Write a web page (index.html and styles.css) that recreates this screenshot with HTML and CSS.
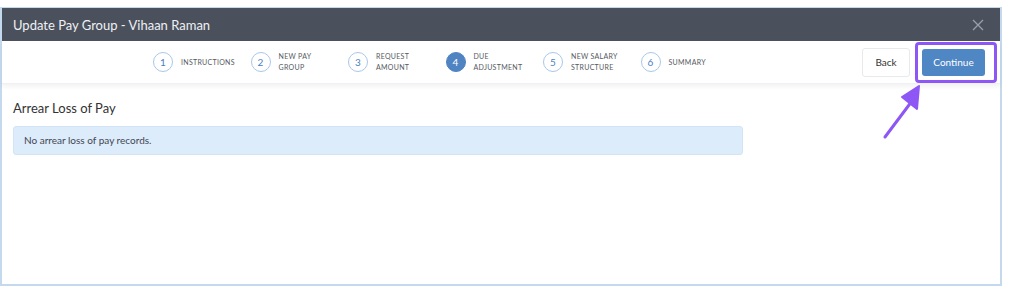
FILE: index.html
```html
<!DOCTYPE html>
<html lang="en">
<head>
  <meta charset="UTF-8" />
  <title>Update Pay Group</title>
  <link rel="stylesheet" href="styles.css">
</head>
<body>
  <div class="modal">
    <div class="modal-header">
      <span class="modal-title">Update Pay Group - Vihaan Raman</span>
      <svg class="close" width="12" height="12" viewBox="0 0 12 12">
        <path d="M1 1 L11 11 M11 1 L1 11" stroke="#9aa0ab" stroke-width="1.3" fill="none"/>
      </svg>
    </div>

    <div class="toolbar">
      <div class="steps">
        <div class="step"><span class="num">1</span><span class="label">Instructions</span></div>
        <div class="step"><span class="num">2</span><span class="label">New Pay<br>Group</span></div>
        <div class="step"><span class="num">3</span><span class="label">Request<br>Amount</span></div>
        <div class="step active"><span class="num">4</span><span class="label">Due<br>Adjustment</span></div>
        <div class="step"><span class="num">5</span><span class="label">New Salary<br>Structure</span></div>
        <div class="step"><span class="num">6</span><span class="label">Summary</span></div>
      </div>
      <div class="actions">
        <button class="btn">Back</button>
        <div class="highlight">
          <button class="btn primary">Continue</button>
        </div>
      </div>
    </div>

    <div class="content">
      <h3>Arrear Loss of Pay</h3>
      <div class="info">No arrear loss of pay records.</div>
    </div>

    <!-- annotation arrow pointing at Continue -->
    <svg class="arrow" width="50" height="56" viewBox="0 0 50 56">
      <path d="M3 53 L30 17" stroke="#8e57f5" stroke-width="3" stroke-linecap="round" fill="none"/>
      <path d="M37 2 L20 13 L35 25 Z" fill="#8e57f5" stroke="#8e57f5" stroke-width="2" stroke-linejoin="round"/>
    </svg>
  </div>
</body>
</html>
```

FILE: styles.css
```css
body {
  margin: 0;
  background: #fff;
  font-family: Lato, "Open Sans", Arial, sans-serif;
}
.modal {
  position: relative;
  margin-top: 7px;
  width: 998px;
  height: 276px;
  border: 1px solid #c4d8ee;
  border-width: 1px 2px 2px 2px;
  background: #fff;
}
.modal-header {
  height: 33px;
  background: #4b505d;
  display: flex;
  align-items: center;
  justify-content: space-between;
  padding: 0 16px 0 11px;
}
.modal-title {
  color: #eef0f3;
  font-size: 13px;
}
.toolbar {
  height: 42px;
  display: flex;
  align-items: center;
  box-shadow: 0 3px 4px rgba(0,0,0,0.05);
  border-bottom: 1px solid #eef0f3;
}
.steps {
  flex: 1;
  display: flex;
  align-items: center;
  padding-left: 151px;
}
.step {
  width: 97.5px;
  display: flex;
  align-items: center;
}
.num {
  width: 18px;
  height: 18px;
  border: 1px solid #a9c7ea;
  border-radius: 50%;
  display: flex;
  align-items: center;
  justify-content: center;
  font-size: 10px;
  color: #4a7fc0;
  margin-right: 8px;
  flex-shrink: 0;
}
.step.active .num {
  background: #4f83c2;
  border-color: #4f83c2;
  color: #fff;
}
.label {
  font-size: 7px;
  line-height: 11px;
  text-transform: uppercase;
  letter-spacing: 0.3px;
  color: #555a62;
}
.actions {
  display: flex;
  align-items: center;
  padding-right: 3px;
}
.btn {
  box-sizing: border-box;
  padding: 0;
  font-family: inherit;
  font-size: 10px;
  height: 29px;
  border-radius: 3px;
  cursor: pointer;
}
.btn:first-child {
  width: 48px;
  background: #fff;
  color: #333;
  border: 1px solid #e8e9ec;
  margin-right: 5px;
}
.highlight {
  border: 3px solid #8e57f5;
  border-radius: 4px;
  padding: 4px;
  display: flex;
}
.btn.primary {
  width: 63px;
  height: 27px;
  background: #4f86c4;
  color: #fff;
  border: none;
}
.content {
  padding: 10px 11px;
}
h3 {
  margin: 6px 0 10px;
  font-weight: normal;
  font-size: 13px;
  color: #333;
}
.info {
  width: 718px;
  height: 27px;
  line-height: 27px;
  padding-left: 10px;
  background: #dcecfa;
  border: 1px solid #d2e4f6;
  border-radius: 3px;
  font-size: 10px;
  color: #3f4654;
}
.arrow {
  position: absolute;
  left: 880px;
  top: 76px;
}
```
